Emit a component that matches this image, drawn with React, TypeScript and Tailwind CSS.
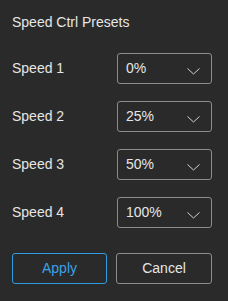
import { useState } from 'react';

const presets = [
  { label: 'Speed 1', value: '0%' },
  { label: 'Speed 2', value: '25%' },
  { label: 'Speed 3', value: '50%' },
  { label: 'Speed 4', value: '100%' },
];

function Chevron() {
  return (
    <svg width="13" height="7" viewBox="0 0 13 7" fill="none" className="shrink-0 mt-[6px]">
      <path d="M0.5 0.5 L6.5 6 L12.5 0.5" stroke="#d0d0d0" strokeWidth="1" />
    </svg>
  );
}

export default function App() {
  const [values] = useState(presets);

  return (
    <div
      className="w-[228px] h-[301px] bg-[#2a2a2a] text-[#e6e6e6] text-[14px] px-3 pt-[14px]"
      style={{ fontFamily: '"Liberation Sans", Arial, sans-serif' }}
    >
      <div className="h-4 leading-4">Speed Ctrl Presets</div>
      <div className="mt-[23px] flex flex-col gap-[17px]">
        {values.map((p) => (
          <div key={p.label} className="flex items-center h-[31px]">
            <span className="w-[105px]">{p.label}</span>
            <div className="flex items-center justify-between w-[95px] h-[31px] rounded-[3px] border border-[#8c8c8c] pl-2 pr-[11px]">
              <span>{p.value}</span>
              <Chevron />
            </div>
          </div>
        ))}
      </div>
      <div className="mt-[25px] flex gap-[9px]">
        <button
          type="button"
          className="w-[95px] h-[31px] rounded-[3px] border border-[#2f9be0] text-[#3aa3e6] text-[14px]"
        >
          Apply
        </button>
        <button
          type="button"
          className="w-[96px] h-[31px] rounded-[3px] border border-[#8c8c8c] text-[#e6e6e6] text-[14px]"
        >
          Cancel
        </button>
      </div>
    </div>
  );
}
